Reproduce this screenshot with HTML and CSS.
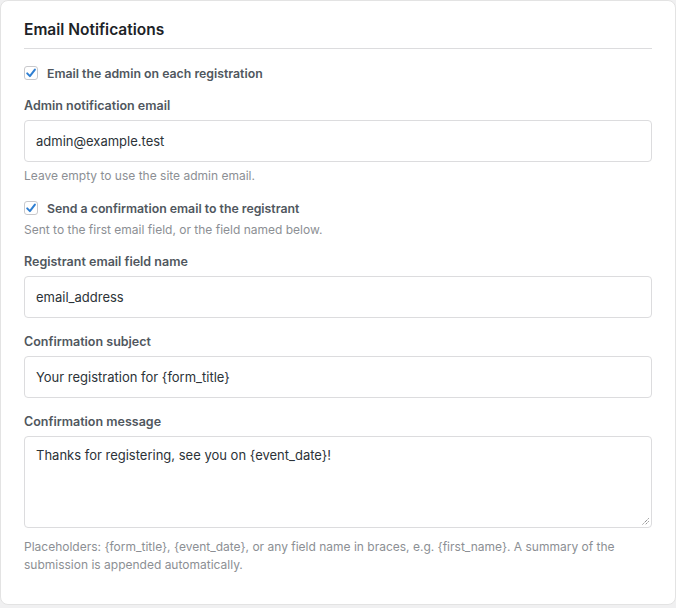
FILE: index.html
```html
<!DOCTYPE html>
<html>
<head>
<meta charset="utf-8">
<title>Email Notifications</title>
<link rel="stylesheet" href="styles.css">
</head>
<body>

<div class="card">
  <h2 class="section_title">Email Notifications</h2>

  <label class="check_row">
    <span class="check_box"><svg viewBox="0 0 14 14" width="14" height="14"><path d="M3.2 7.4 L5.9 10.1 L10.9 3.6" fill="none" stroke="#2f7fd2" stroke-width="2" stroke-linecap="round" stroke-linejoin="round"/></svg></span>
    Email the admin on each registration
  </label>

  <div class="field">
    <div class="field_label">Admin notification email</div>
    <div class="text_input">admin@example.test</div>
    <p class="help">Leave empty to use the site admin email.</p>
  </div>

  <label class="check_row">
    <span class="check_box"><svg viewBox="0 0 14 14" width="14" height="14"><path d="M3.2 7.4 L5.9 10.1 L10.9 3.6" fill="none" stroke="#2f7fd2" stroke-width="2" stroke-linecap="round" stroke-linejoin="round"/></svg></span>
    Send a confirmation email to the registrant
  </label>
  <p class="help help_tight">Sent to the first email field, or the field named below.</p>

  <div class="field">
    <div class="field_label">Registrant email field name</div>
    <div class="text_input">email_address</div>
  </div>

  <div class="field">
    <div class="field_label">Confirmation subject</div>
    <div class="text_input">Your registration for {form_title}</div>
  </div>

  <div class="field">
    <div class="field_label">Confirmation message</div>
    <div class="text_input text_area">Thanks for registering, see you on {event_date}!
      <svg class="grip" viewBox="0 0 8 8" width="8" height="8"><path d="M7.5 1.5 L1.5 7.5 M7.5 4.5 L4.5 7.5" stroke="#555" stroke-width="1" stroke-dasharray="1 1"/></svg>
    </div>
    <p class="help help_last">Placeholders: {form_title}, {event_date}, or any field name in braces, e.g. {first_name}. A summary of the submission is appended automatically.</p>
  </div>
</div>

</body>
</html>
```

FILE: styles.css
```css
* {
    box-sizing: border-box;
}
body {
    margin: 0;
    background-color: #f0f0f1;
    font-family: Inter, "Liberation Sans", sans-serif;
    color: #3c434a;
}
.card {
    width: 676px;
    height: 605px;
    background-color: white;
    border: 1px solid #e3e3e3;
    border-radius: 8px;
    padding: 19px 23px 0 23px;
}
.section_title {
    margin: 0;
    font-size: 15.5px;
    font-weight: 600;
    color: #1d2327;
    padding-bottom: 9px;
    border-bottom: 1px solid #dcdcde;
    margin-bottom: 14px;
}
.check_row {
    display: flex;
    align-items: center;
    gap: 9px;
    font-size: 12.3px;
    font-weight: 600;
    color: #50575e;
    height: 20px;
}
.check_box {
    display: inline-block;
    width: 14px;
    height: 14px;
    border: 1px solid #c9c9cc;
    border-radius: 3px;
    background-color: white;
    position: relative;
}
.check_box svg {
    position: absolute;
    left: -1px;
    top: -1px;
}
.field {
    margin-top: 13px;
}
.field + .field {
    margin-top: 14px;
}
.field_label {
    font-size: 12.5px;
    font-weight: 600;
    color: #50575e;
    height: 20px;
    line-height: 20px;
    margin-bottom: 4px;
}
.text_input {
    height: 42px;
    border: 1px solid #dcdcde;
    border-radius: 4px;
    padding: 0 11px;
    font-size: 13px;
    line-height: 40px;
    color: #2c3338;
    position: relative;
}
.text_area {
    height: 92px;
    line-height: 20px;
    padding-top: 8px;
}
.grip {
    position: absolute;
    right: 2px;
    bottom: 2px;
}
.help {
    margin: 5px 0 13px 0;
    font-size: 12px;
    line-height: 18px;
    color: #8c8f94;
}
.help_tight {
    margin-top: 3px;
    margin-bottom: 0;
}
.help_last {
    margin-top: 10px;
}
```
